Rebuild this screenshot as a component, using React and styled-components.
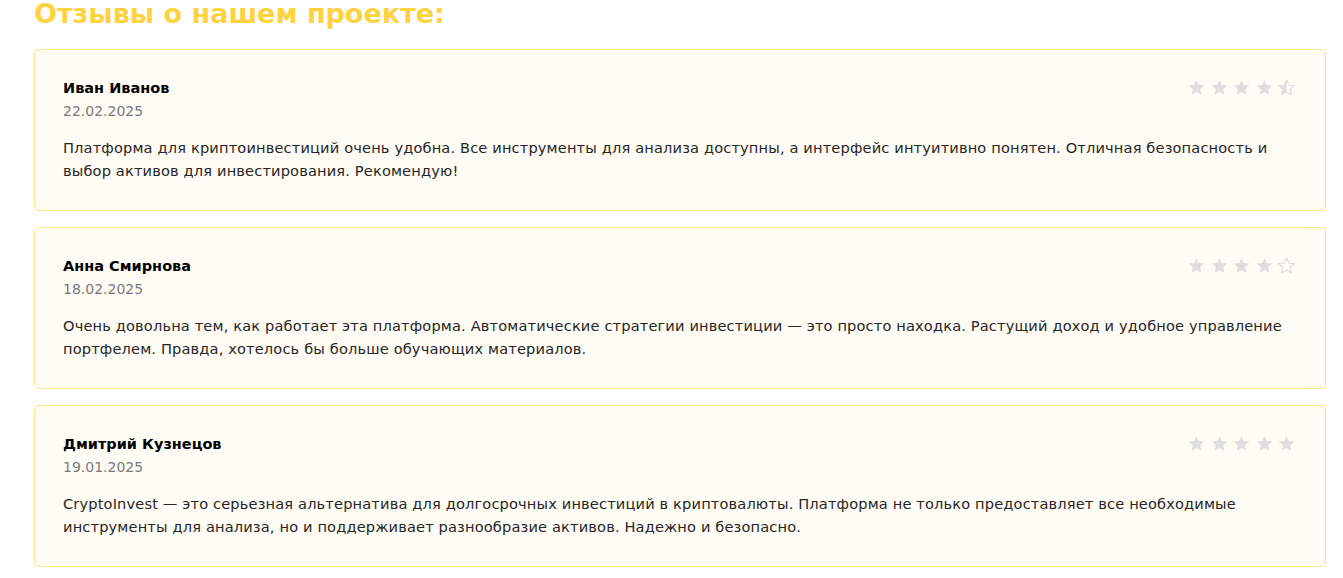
import React from 'react';
import styled, { createGlobalStyle } from 'styled-components';

const GlobalStyle = createGlobalStyle`
  body {
    margin: 0;
    background: #ffffff;
    font-family: "DejaVu Sans", "Noto Sans", sans-serif;
  }
`;

const Section = styled.section`
  padding: 0 17px 0 34px;
  overflow: hidden;
  height: 578px;
  box-sizing: border-box;
`;

const Title = styled.h2`
  margin: 0 0 22px;
  font-size: 27px;
  line-height: 27px;
  font-weight: 700;
  color: #ffd23f;
`;

const List = styled.div`
  display: flex;
  flex-direction: column;
  gap: 16px;
`;

const Card = styled.article`
  background: #fffcf5;
  border: 1px solid #ffe48a;
  border-radius: 5px;
  padding: 28px 29px 28px 28px;
`;

const Head = styled.div`
  display: flex;
  justify-content: space-between;
  align-items: flex-start;
`;

const Name = styled.div`
  font-size: 14.5px;
  line-height: 20px;
  font-weight: 700;
  color: #000;
`;

const Date = styled.div`
  margin-top: 3px;
  font-size: 14px;
  line-height: 20px;
  color: #7a7a7a;
`;

const Stars = styled.div`
  display: flex;
  gap: 3.5px;
`;

const Text = styled.p`
  margin: 15px 0 0;
  font-size: 14.6px;
  line-height: 23px;
  letter-spacing: 0.15px;
  color: #262626;
  white-space: nowrap;
`;

const STAR = 'M12 2.5l2.9 6.4 6.9.7-5.2 4.7 1.5 6.9L12 17.7l-6.1 3.5 1.5-6.9-5.2-4.7 6.9-.7z';

const Star = ({ type }) => (
  <svg width="19" height="19" viewBox="0 0 24 24">
    <defs>
      <clipPath id="half-left">
        <rect x="0" y="0" width="12" height="24" />
      </clipPath>
    </defs>
    {type === 'full' && <path d={STAR} fill="#dedede" />}
    {type === 'empty' && (
      <path d={STAR} fill="none" stroke="#dedede" strokeWidth="1.6" strokeLinejoin="round" />
    )}
    {type === 'half' && (
      <>
        <path d={STAR} fill="none" stroke="#dedede" strokeWidth="1.6" strokeLinejoin="round" />
        <path d={STAR} fill="#dedede" clipPath="url(#half-left)" />
      </>
    )}
  </svg>
);

const reviews = [
  {
    name: 'Иван Иванов',
    date: '22.02.2025',
    stars: ['full', 'full', 'full', 'full', 'half'],
    lines: [
      'Платформа для криптоинвестиций очень удобна. Все инструменты для анализа доступны, а интерфейс интуитивно понятен. Отличная безопасность и',
      'выбор активов для инвестирования. Рекомендую!',
    ],
  },
  {
    name: 'Анна Смирнова',
    date: '18.02.2025',
    stars: ['full', 'full', 'full', 'full', 'empty'],
    lines: [
      'Очень довольна тем, как работает эта платформа. Автоматические стратегии инвестиции — это просто находка. Растущий доход и удобное управление',
      'портфелем. Правда, хотелось бы больше обучающих материалов.',
    ],
  },
  {
    name: 'Дмитрий Кузнецов',
    date: '19.01.2025',
    stars: ['full', 'full', 'full', 'full', 'full'],
    lines: [
      'CryptoInvest — это серьезная альтернатива для долгосрочных инвестиций в криптовалюты. Платформа не только предоставляет все необходимые',
      'инструменты для анализа, но и поддерживает разнообразие активов. Надежно и безопасно.',
    ],
  },
];

const App = () => (
  <>
    <GlobalStyle />
    <Section>
      <Title>Отзывы о нашем проекте:</Title>
      <List>
        {reviews.map((r) => (
          <Card key={r.name}>
            <Head>
              <div>
                <Name>{r.name}</Name>
                <Date>{r.date}</Date>
              </div>
              <Stars>
                {r.stars.map((s, i) => (
                  <Star key={i} type={s} />
                ))}
              </Stars>
            </Head>
            <Text>
              {r.lines[0]}
              <br />
              {r.lines[1]}
            </Text>
          </Card>
        ))}
      </List>
    </Section>
  </>
);

export default App;
